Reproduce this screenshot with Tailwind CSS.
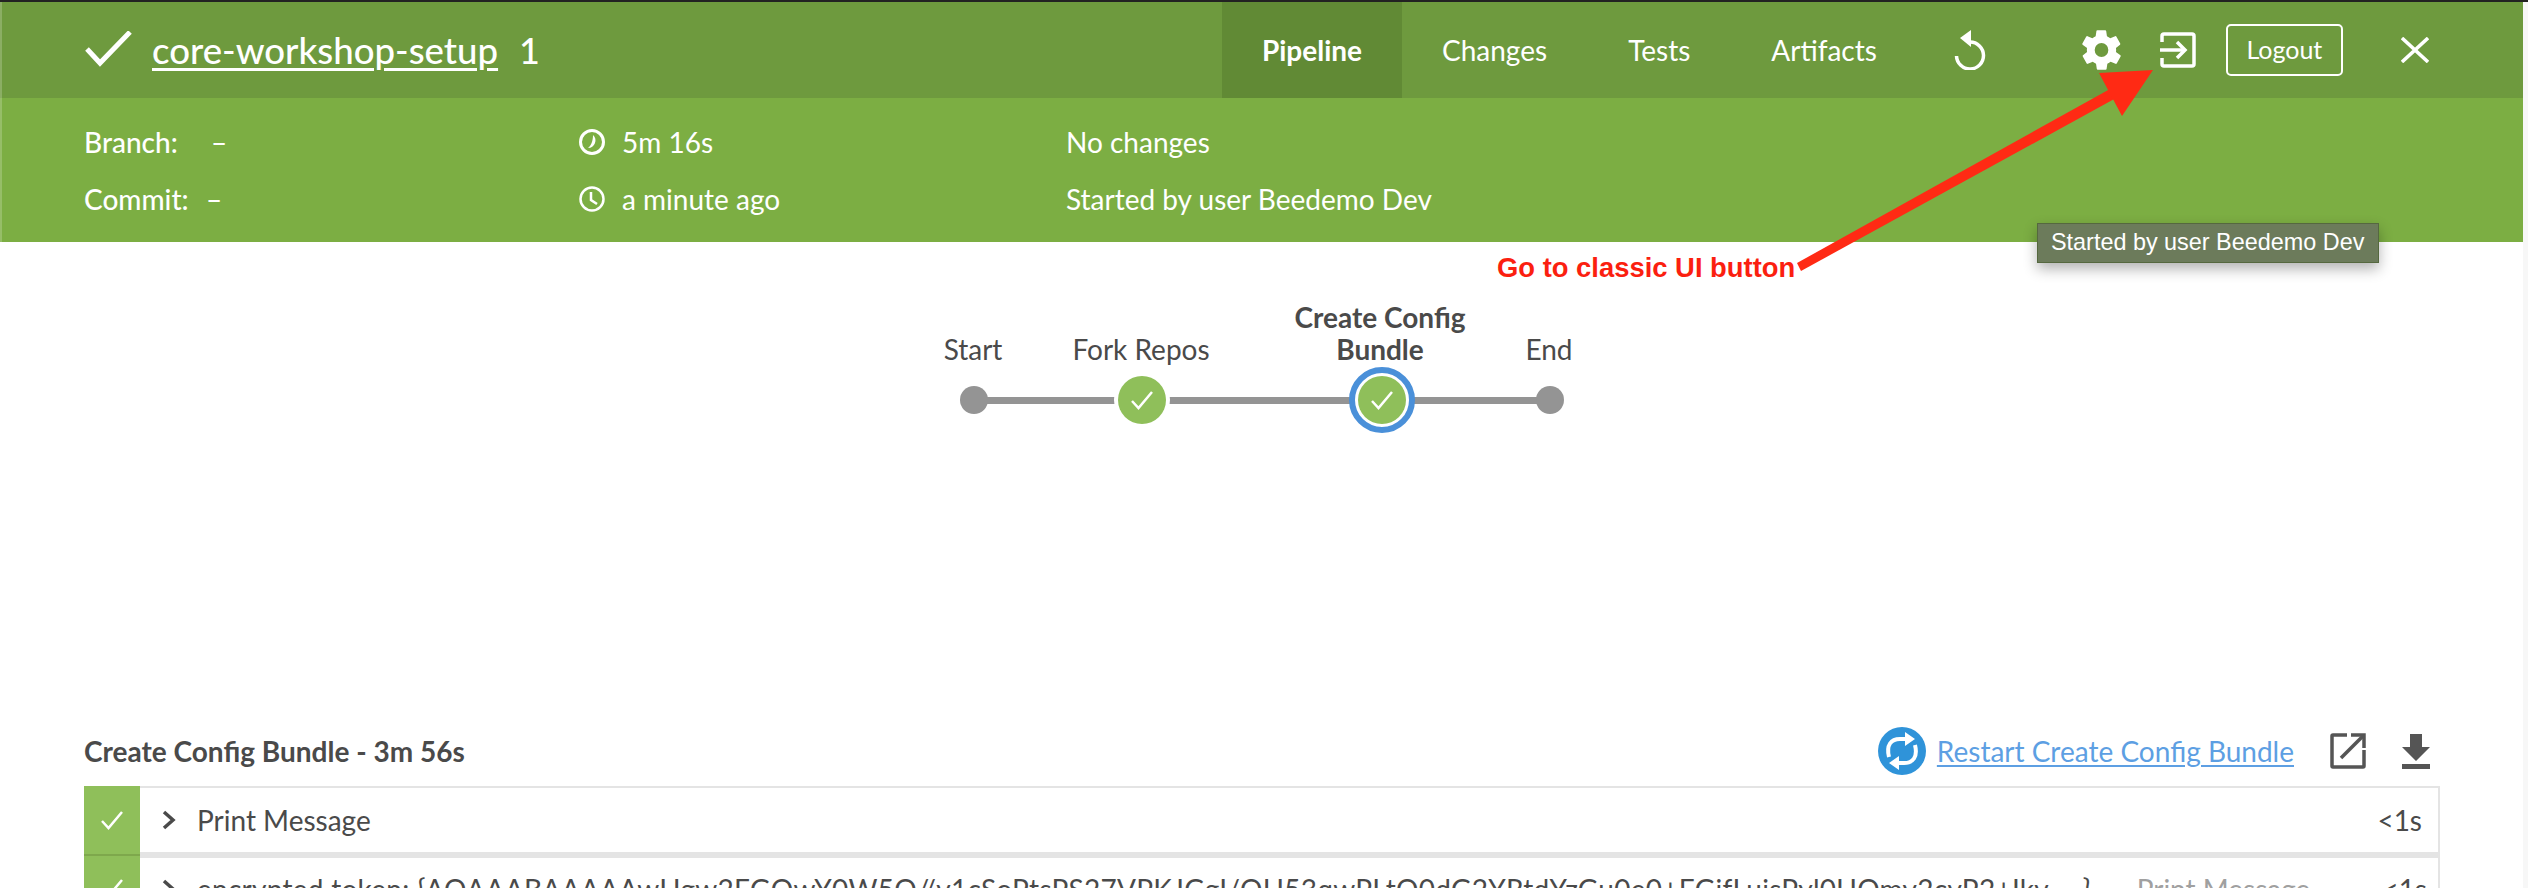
<!doctype html>
<html><head><meta charset="utf-8">
<script src="https://cdn.jsdelivr.net/npm/@tailwindcss/browser@4"></script>
</head>
<body class="m-0 bg-white">
<div class="relative w-[2528px] h-[888px] overflow-hidden bg-white font-['Lato','Liberation_Sans',sans-serif] text-[#4a4a4a]">
  <div class="h-[2px] bg-[#222]"></div>
  <div class="w-[2523px]">
    <header class="h-[96px] bg-[#6e9a3e] flex items-stretch text-white">
      <div class="w-[1222px] flex items-center pl-[85px]">
        <svg class="w-[47px] h-[36px] mr-[20px] -mt-[2px]" viewBox="0 0 47 36" fill="none" stroke="white" stroke-width="5"><path d="M2 18 L15 32 L45 1"/></svg>
        <a class="text-[36.6px] font-medium underline underline-offset-[4px] decoration-[3px]">core-workshop-setup</a>
        <span class="text-[36px] font-medium ml-[21px]">1</span>
      </div>
      <nav class="flex items-stretch text-[28px]">
        <a class="w-[180px] bg-[#618a35] flex items-center justify-center font-bold">Pipeline</a>
        <a class="ml-[40px] flex items-center">Changes</a>
        <a class="ml-[81px] flex items-center">Tests</a>
        <a class="ml-[81px] flex items-center">Artifacts</a>
      </nav>
      <div class="flex items-center">
        <svg class="ml-[77px] w-[32px] h-[40px]" viewBox="0 0 32 40" fill="none" stroke="white" stroke-width="3.5"><path d="M16 12 A13.5 13.5 0 1 1 2.5 26"/><path d="M6 8 L17 0 L17 17 Z" fill="white" stroke="none"/></svg>
        <svg class="ml-[96px] w-[39px] h-[40px]" viewBox="2 2 20 20" preserveAspectRatio="none" fill="white"><path fill-rule="evenodd" d="M19.4 13c.1-.3.1-.7.1-1s0-.7-.1-1l2.1-1.6c.2-.2.2-.4.1-.6l-2-3.5c-.1-.2-.4-.3-.6-.2l-2.5 1c-.5-.4-1.1-.7-1.7-1l-.4-2.6c0-.2-.2-.4-.5-.4h-4c-.3 0-.5.2-.5.4l-.4 2.6c-.6.3-1.2.6-1.7 1l-2.5-1c-.2-.1-.5 0-.6.2l-2 3.5c-.1.2-.1.4.1.6L4.6 11c-.1.3-.1.7-.1 1s0 .7.1 1l-2.1 1.6c-.2.2-.2.4-.1.6l2 3.5c.1.2.4.3.6.2l2.5-1c.5.4 1.1.7 1.7 1l.4 2.6c0 .2.2.4.5.4h4c.3 0 .5-.2.5-.4l.4-2.6c.6-.3 1.2-.6 1.7-1l2.5 1c.2.1.5 0 .6-.2l2-3.5c.1-.2.1-.4-.1-.6L19.4 13zM12 15.5a3.5 3.5 0 1 1 0-7 3.5 3.5 0 0 1 0 7z"/></svg>
        <svg class="ml-[39px] w-[36px] h-[36px]" viewBox="0 0 36 36" fill="none" stroke="white" stroke-width="3.5"><path d="M2 10 V4 Q2 2 4 2 H32 Q34 2 34 4 V32 Q34 34 32 34 H4 Q2 34 2 32 V26"/><path d="M0 18 H25"/><path d="M17 10 L25 18 L17 26"/></svg>
        <a class="ml-[30px] w-[117px] h-[52px] rounded-[5px] border-2 border-white flex items-center justify-center text-[25px]">Logout</a>
        <svg class="ml-[58px] w-[28px] h-[26px]" viewBox="0 0 28 26" fill="none" stroke="white" stroke-width="3.5"><path d="M1 1 L27 25 M27 1 L1 25"/></svg>
      </div>
    </header>
    <section class="relative h-[144px] bg-[#7cae43] text-white text-[28px] flex">
      <div class="absolute left-0 -top-[96px] bottom-0 w-[2px] bg-white/20"></div>
      <div class="w-[578px] pl-[84px] pt-[27px] flex flex-col gap-[24px]">
        <div class="h-[33px] flex items-center font-medium"><span class="w-[127px]">Branch:</span><span>–</span></div>
        <div class="h-[33px] flex items-center font-medium"><span class="w-[122px]">Commit:</span><span>–</span></div>
      </div>
      <div class="w-[488px] pl-[1px] pt-[27px] flex flex-col gap-[24px]">
        <div class="h-[33px] flex items-center gap-[17px]">
          <svg class="w-[26px] h-[26px]" viewBox="0 0 26 26" fill="none"><circle cx="13" cy="13" r="11.5" stroke="white" stroke-width="3"/><path d="M14 6 A7.5 7.5 0 0 1 9 19 C12 17 14 12 14 6Z" fill="white"/></svg><span>5m 16s</span>
        </div>
        <div class="h-[33px] flex items-center gap-[17px]">
          <svg class="w-[26px] h-[26px]" viewBox="0 0 26 26" fill="none" stroke="white" stroke-width="2.5"><circle cx="13" cy="13" r="11.5"/><path d="M12 6 V14 L18 18"/></svg><span>a minute ago</span>
        </div>
      </div>
      <div class="pt-[27px] flex flex-col gap-[24px]">
        <div class="h-[33px] flex items-center">No changes</div>
        <div class="h-[33px] flex items-center">Started by user Beedemo Dev</div>
      </div>
    </section>
    <section class="relative h-[482px]">
      <div class="absolute left-[943px] top-[91px] w-[60px] text-center text-[28px] leading-[32px]">Start</div>
      <div class="absolute left-[1061px] top-[91px] w-[160px] text-center text-[28px] leading-[32px] whitespace-nowrap">Fork Repos</div>
      <div class="absolute left-[1260px] top-[59px] w-[240px] text-center text-[28px] leading-[32px] font-bold">Create Config<br>Bundle</div>
      <div class="absolute left-[1519px] top-[91px] w-[60px] text-center text-[28px] leading-[32px]">End</div>
      <div class="absolute left-[974px] top-[155px] w-[576px] h-[7px] bg-[#949494]"></div>
      <div class="absolute left-[960px] top-[144px] w-[28px] h-[28px] rounded-full bg-[#949494]"></div>
      <div class="absolute left-[1114px] top-[130px] w-[56px] h-[56px] rounded-full bg-white flex items-center justify-center">
        <div class="w-[48px] h-[48px] rounded-full bg-[#8fbf5a] flex items-center justify-center"><svg class="w-[24px] h-[20px]" viewBox="0 0 24 20" fill="none" stroke="white" stroke-width="2.5"><path d="M2 11 L8.5 18 L22 2"/></svg></div>
      </div>
      <div class="absolute left-[1349px] top-[125px] w-[66px] h-[66px] rounded-full border-[6px] border-[#4a90d9] bg-white flex items-center justify-center">
        <div class="w-[48px] h-[48px] shrink-0 rounded-full bg-[#8fbf5a] flex items-center justify-center"><svg class="w-[24px] h-[20px]" viewBox="0 0 24 20" fill="none" stroke="white" stroke-width="2.5"><path d="M2 11 L8.5 18 L22 2"/></svg></div>
      </div>
      <div class="absolute left-[1536px] top-[144px] w-[28px] h-[28px] rounded-full bg-[#949494]"></div>
    </section>
    <section class="pl-[84px] w-[2440px]">
      <div class="h-[70px] flex items-center -mt-[8px]">
        <span class="text-[28px] font-bold grow">Create Config Bundle - 3m 56s</span>
        <svg class="w-[48px] h-[48px] mr-[11px]" viewBox="0 0 48 48"><circle cx="24" cy="24" r="24" fill="#2f93d9"/><g fill="none" stroke="white" stroke-width="4"><path d="M11 30 C8 18 13 12 22 12 H30"/><path d="M37 18 C40 30 35 36 26 36 H18"/></g><path d="M27 5 L37 12 L27 19Z M21 29 L11 36 L21 43Z" fill="white"/></svg>
        <a class="text-[28px] text-[#5d9fe3] underline underline-offset-[3px] mr-[36px]">Restart Create Config Bundle</a>
        <svg class="w-[36px] h-[36px] mr-[36px]" viewBox="0 0 36 36" fill="none" stroke="#555" stroke-width="3.5"><path d="M17 2 H3 Q2 2 2 3 V33 Q2 34 3 34 H33 Q34 34 34 33 V17"/><path d="M11 25 L33 3"/><path d="M21 2 H34 V15"/></svg>
        <svg class="w-[28px] h-[35px] mr-[10px]" viewBox="0 0 28 35" fill="#555"><path d="M8 0 H20 V13 H28 L14 27 L0 13 H8 Z"/><rect x="0" y="30" width="28" height="5"/></svg>
      </div>
      <div class="h-[68px] border-2 border-[#e4e4e4] border-l-0 flex items-center pr-[16px]">
        <div class="w-[56px] self-stretch bg-[#8fbf5a] -my-[2px] flex items-center justify-center"><svg class="w-[24px] h-[20px]" viewBox="0 0 24 20" fill="none" stroke="white" stroke-width="2.5"><path d="M2 11 L8.5 18 L22 2"/></svg></div>
        <svg class="ml-[22px] w-[14px] h-[20px] mr-[21px]" viewBox="0 0 14 20" fill="none" stroke="#4a4a4a" stroke-width="3.5"><path d="M2 2 L11 10 L2 18"/></svg>
        <span class="text-[28px] grow">Print Message</span>
        <span class="text-[28px]">&lt;1s</span>
      </div>
      <div class="h-[68px] border-2 border-t-[4px] border-[#e4e4e4] border-l-0 flex items-center pr-[11px]">
        <div class="w-[56px] self-stretch bg-[#8fbf5a] border-t-[2px] border-[#7ea84c] -mt-[4px] flex items-center justify-center"><svg class="w-[24px] h-[20px]" viewBox="0 0 24 20" fill="none" stroke="white" stroke-width="2.5"><path d="M2 11 L8.5 18 L22 2"/></svg></div>
        <svg class="ml-[22px] w-[14px] h-[20px] mr-[21px]" viewBox="0 0 14 20" fill="none" stroke="#4a4a4a" stroke-width="3.5"><path d="M2 2 L11 10 L2 18"/></svg>
        <span class="text-[28px] grow whitespace-nowrap tracking-[0.27px]">encrypted token: {AQAAABAAAAAwHgw2FGQwY0W5Q//v1cSoPtsPS27VPKJGgI/QH53qwPLtO0dG2YRtdYzGu0e0+EGjfLuisPyl0UQmv2cvP2+Ikv...<span class="ml-[14px]">}</span></span>
        <span class="text-[28px] text-[#a0a0a0] mr-[72px]">Print Message</span>
        <span class="text-[28px]">&lt;1s</span>
      </div>
    </section>
  </div>
  <div class="absolute right-0 top-[2px] w-[5px] h-[886px] bg-[#f7f7f7]"></div>
  <div class="absolute left-[2037px] top-[223px] w-[342px] h-[40px] pl-[13px] bg-[#6c7b5b] border border-[#55683f] shadow-[0_6px_14px_rgba(0,0,0,0.3)] text-white text-[23.4px] font-['Liberation_Sans',sans-serif] flex items-center whitespace-nowrap">Started by user Beedemo Dev</div>
  <svg class="absolute left-0 top-0 pointer-events-none" width="2528" height="888" viewBox="0 0 2528 888"><path d="M1797 263 L1801 271 L2116 98 L2110 89 Z" fill="#ff2a14"/><path d="M2099 73 L2153 70 L2122 116 Z" fill="#ff2a14"/></svg>
  <span class="absolute left-[1497px] top-[252px] text-[27.4px] leading-[32px] font-bold text-[#fb1f10] font-['Liberation_Sans',sans-serif] whitespace-nowrap">Go to classic UI button</span>
</div>
</body></html>
